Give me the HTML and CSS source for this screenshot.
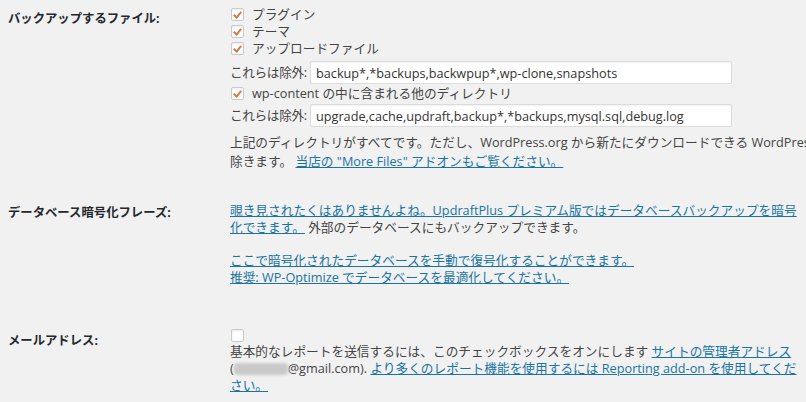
FILE: index.html
```html
<!DOCTYPE html>
<html lang="ja">
<head>
    <meta charset="UTF-8">
    <meta name="viewport" content="width=device-width, initial-scale=1.0">
    <title>UpdraftPlus 設定</title>
    <link rel="stylesheet" href="styles.css">
</head>
<body>
    <div class="settings">
        <!-- ファイル -->
        <div class="form-row row-files">
            <div class="row-label">バックアップするファイル:</div>
            <div class="row-field">
                <label class="check-line"><span class="cb checked"></span>プラグイン</label>
                <label class="check-line"><span class="cb checked"></span>テーマ</label>
                <label class="check-line"><span class="cb checked"></span>アップロードファイル</label>
                <div class="exclude-line first">
                    <span class="exclude-label">これらは除外:</span>
                    <input type="text" class="exclude-input" value="backup*,*backups,backwpup*,wp-clone,snapshots">
                </div>
                <label class="check-line wp-content"><span class="cb checked"></span>wp-content の中に含まれる他のディレクトリ</label>
                <div class="exclude-line">
                    <span class="exclude-label">これらは除外:</span>
                    <input type="text" class="exclude-input" value="upgrade,cache,updraft,backup*,*backups,mysql.sql,debug.log">
                </div>
                <p class="note">上記のディレクトリがすべてです。ただし、WordPress.org から新たにダウンロードできる WordPress コア自体は除きます。 <a href="#">当店の "More Files" アドオンもご覧ください。</a></p>
            </div>
        </div>

        <!-- データベース -->
        <div class="form-row row-db">
            <div class="row-label">データベース暗号化フレーズ:</div>
            <div class="row-field">
                <p class="tight"><a href="#">覗き見されたくはありませんよね。UpdraftPlus プレミアム版ではデータベースバックアップを暗号化できます。</a> 外部のデータベースにもバックアップできます。</p>
                <p class="tight spaced"><a href="#">ここで暗号化されたデータベースを手動で復号化することができます。</a><br><a href="#">推奨: WP-Optimize でデータベースを最適化してください。</a></p>
            </div>
        </div>

        <!-- メール -->
        <div class="form-row row-mail">
            <div class="row-label">メールアドレス:</div>
            <div class="row-field">
                <div class="cb-solo"><span class="cb"></span></div>
                <p class="tight">基本的なレポートを送信するには、このチェックボックスをオンにします <a href="#">サイトの管理者アドレス</a> <span class="addr">(<span class="blur"></span>@gmail.com).</span> <a href="#">より多くのレポート機能を使用するには Reporting add-on を使用してください。</a></p>
            </div>
        </div>
    </div>
</body>
</html>
```

FILE: styles.css
```css
* {
    box-sizing: border-box;
    margin: 0;
    padding: 0;
}
html,
body {
    width: 100%;
    height: 100%;
    overflow: hidden;
    background: #f1f1f1;
}
body {
    font-family: "Open Sans", "Noto Sans CJK JP", sans-serif;
    font-size: 12.35px;
    color: #444;
    line-height: 17px;
}
a {
    color: #1a74a3;
    text-decoration: underline;
}

.settings {
    padding: 6px 0 0 8px;
    width: 1000px;
}
.form-row {
    display: flex;
}
.row-label {
    width: 222px;
    flex: none;
    font-weight: bold;
    color: #23282d;
    padding-top: 4px;
}
.row-field {
    width: 572px;
    flex: none;
    font-size: 12.7px;
}

/* checkboxes */
.check-line {
    display: flex;
    align-items: center;
    height: 17px;
}
.cb {
    display: inline-block;
    width: 13px;
    height: 13px;
    margin: 0 8px 0 1px;
    background: #fff;
    border: 1px solid #c8cbce;
    border-radius: 2px;
    box-shadow: inset 0 1px 2px rgba(0, 0, 0, 0.08);
    position: relative;
    flex: none;
}
.cb.checked::after {
    content: "";
    position: absolute;
    left: 3px;
    top: 1px;
    width: 3px;
    height: 6px;
    border: solid #cf7c48;
    border-width: 0 2px 2px 0;
    transform: rotate(40deg);
}

/* exclusion inputs */
.exclude-line {
    display: flex;
    align-items: center;
    margin-top: 4px;
}
.exclude-line + .check-line {
    margin-top: 1px;
}
.wp-content + .exclude-line {
    margin-top: 2px;
}
.exclude-label {
    width: 80px;
    flex: none;
    letter-spacing: -0.4px;
}
.exclude-input {
    width: 422px;
    height: 23px;
    padding: 0 5px;
    border: 1px solid #dcdcdc;
    border-radius: 2px;
    background: #fff;
    box-shadow: inset 0 1px 2px rgba(0, 0, 0, 0.06);
    font: inherit;
    color: #333;
    outline: none;
}

/* the first note runs past the right edge of the frame */
.note {
    width: 655px;
    margin-top: 6px;
    line-height: 19px;
}

.row-db {
    margin-top: 31px;
}
.row-db .row-label {
    padding-top: 2px;
}
.tight {
    line-height: 17px;
}
.spaced {
    margin-top: 16px;
}

.row-mail {
    margin-top: 42px;
}
.cb-solo {
    height: 15px;
    padding-top: 1px;
}
.cb-solo .cb {
    display: block;
}
.addr {
    white-space: nowrap;
}
.blur {
    display: inline-block;
    width: 54px;
    height: 12px;
    vertical-align: -2px;
    background: #c9c9c9;
    border-radius: 4px;
    filter: blur(1.5px);
}
```
